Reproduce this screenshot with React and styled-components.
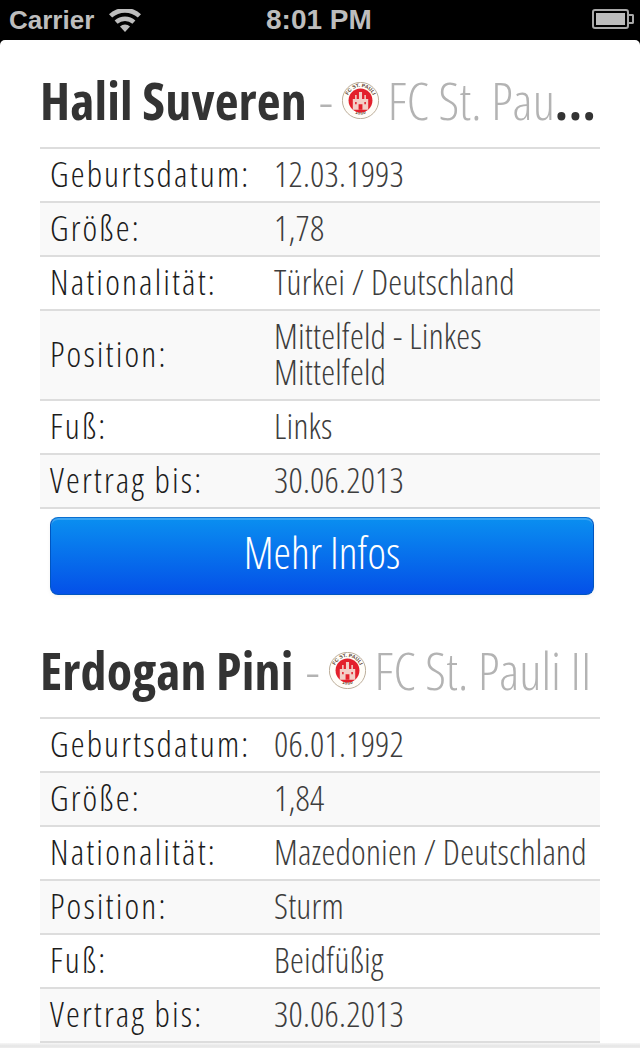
import styled, { createGlobalStyle } from 'styled-components';

const players = [
  {
    name: 'Halil Suveren',
    truncated: true,
    rows: [
      ['Geburtsdatum:', '12.03.1993'],
      ['Größe:', '1,78'],
      ['Nationalität:', 'Türkei / Deutschland'],
      ['Position:', 'Mittelfeld - Linkes Mittelfeld'],
      ['Fuß:', 'Links'],
      ['Vertrag bis:', '30.06.2013'],
    ],
  },
  {
    name: 'Erdogan Pini',
    rows: [
      ['Geburtsdatum:', '06.01.1992'],
      ['Größe:', '1,84'],
      ['Nationalität:', 'Mazedonien / Deutschland'],
      ['Position:', 'Sturm'],
      ['Fuß:', 'Beidfüßig'],
      ['Vertrag bis:', '30.06.2013'],
    ],
  },
];

function Crest({ id }) {
  return (
    <CrestSvg viewBox="0 0 48 48">
      <defs>
        <path id={`${id}-top`} d="M6.5 24a17.5 17.5 0 0 1 35 0" />
        <path id={`${id}-bottom`} d="M5 27a19.5 19.5 0 0 0 38 0" />
      </defs>
      <circle cx="24" cy="24" r="23.5" fill="#fffdf8" stroke="#a8967e" />
      <CrestText>
        <textPath href={`#${id}-top`} startOffset="50%" textAnchor="middle">FC ST. PAULI</textPath>
      </CrestText>
      <CrestText>
        <textPath href={`#${id}-bottom`} startOffset="50%" textAnchor="middle">1910</textPath>
      </CrestText>
      <circle cx="24" cy="24" r="15.5" fill="#e3202c" />
      <path d="M14 36v-14h3v-5h2v5h3v-9h4v9h3v-5h2v5h3v14z" fill="#f3cfc8" />
      <path d="M21.5 36v-7h5v7zM17 26h2v3h-2zM29 26h2v3h-2z" fill="#e3202c" />
    </CrestSvg>
  );
}

function App() {
  return (
    <>
      <GlobalStyle />
      <StatusBar>
        <Carrier>Carrier</Carrier>
        <WifiIcon viewBox="0 0 32 23">
          <path d="M16 23l-5-5.6a7.4 7.4 0 0 1 10 0z" />
          <path d="M8.6 14.8l-3-3.3a15.4 15.4 0 0 1 20.8 0l-3 3.3a11 11 0 0 0-14.8 0z" />
          <path d="M3.2 8.6L0 5.2a23.5 23.5 0 0 1 32 0l-3.200 3.400a19 19 0 0 0-25.600 0z" />
        </WifiIcon>
        <Clock>8:01 PM</Clock>
        <Battery>
          <BatteryFill />
        </Battery>
      </StatusBar>
      <Page>
        {players.map((player, i) => (
          <Player key={player.name}>
            <Heading>
              <Name>{player.name}</Name>
              <Dash>-</Dash>
              <Crest id={`crest-${i}`} />
              <Club>{player.truncated ? 'FC St. Pau' : 'FC St. Pauli II'}</Club>
              {player.truncated && <Dots>...</Dots>}
            </Heading>
            <Table>
              {player.rows.map(([label, value]) => (
                <Row key={label}>
                  <Label>{label}</Label>
                  <Value>{value}</Value>
                </Row>
              ))}
            </Table>
            {player.truncated && <MoreButton>Mehr Infos</MoreButton>}
          </Player>
        ))}
      </Page>
      <BottomEdge />
    </>
  );
}

const GlobalStyle = createGlobalStyle`
  html, body {
    margin: 0;
    height: 1048px;
    overflow: hidden;
    background: #000;
    font-family: "Open Sans", "Liberation Sans", sans-serif;
    font-stretch: 75%;
  }
`;

const StatusBar = styled.div`
  height: 40px;
  background: #000;
  color: #bdbdbd;
  display: flex;
  align-items: center;
  padding: 0 6px 0 9px;
  font-family: "Liberation Sans", sans-serif;
  font-stretch: normal;
  font-size: 26px;
  font-weight: 700;
  position: relative;
`;

const Carrier = styled.span``;

const WifiIcon = styled.svg`
  width: 32px;
  height: 23px;
  margin-left: 15px;
  fill: #bdbdbd;
`;

const Clock = styled.span`
  position: absolute;
  left: 266px;
  font-size: 28px;
`;

const Battery = styled.div`
  margin-left: auto;
  margin-right: 5px;
  margin-top: -2px;
  box-sizing: border-box;
  width: 37px;
  height: 20px;
  border: 2px solid #a8a8a8;
  border-radius: 3px;
  padding: 2px;
  position: relative;
  &::after {
    content: '';
    position: absolute;
    box-sizing: border-box;
    right: -7px;
    top: 3px;
    width: 5px;
    height: 10px;
    border: 2px solid #a8a8a8;
    border-left: none;
    border-radius: 0 2px 2px 0;
  }
`;

const BatteryFill = styled.div`
  height: 100%;
  background: #bdbdbd;
`;

const Page = styled.main`
  background: #fff;
  border-radius: 5px 5px 0 0;
  height: 1003px;
  overflow: hidden;
  padding: 0 40px;
`;

const Player = styled.section`
  padding-top: 27px;
  margin-bottom: 15px;
`;

const Heading = styled.h2`
  margin: 0;
  box-sizing: border-box;
  height: 80px;
  padding-bottom: 16px;
  display: flex;
  align-items: center;
  white-space: nowrap;
  color: #b3b3b3;
  font-size: 52px;
  font-weight: 300;
`;

const Name = styled.span`
  color: #333;
  font-weight: 700;
  letter-spacing: 0.15px;
  margin-right: 12px;
`;

const Dash = styled.span`
  margin-right: 9px;
`;

const CrestSvg = styled.svg`
  width: 37px;
  height: 37px;
  margin-right: 9px;
  position: relative;
  top: 1px;
`;

const CrestText = styled.text`
  font-family: "Liberation Sans", sans-serif;
  font-stretch: normal;
  font-size: 6.5px;
  font-weight: 700;
  fill: #5a3d30;
`;

const Club = styled.span``;

const Dots = styled.span`
  color: #333;
  font-weight: 700;
  letter-spacing: 0.6px;
`;

const Table = styled.div`
  border-top: 2px solid #ddd;
`;

const Row = styled.div`
  display: grid;
  grid-template-columns: 225px 1fr;
  align-items: center;
  padding: 7px 8px 9px 10px;
  border-bottom: 2px solid #ddd;
  color: #1c1c1c;
  font-size: 35px;
  line-height: 36px;
  &:nth-child(even) {
    background: #f9f9f9;
  }
`;

const Label = styled.div`
  font-weight: 300;
  letter-spacing: 2.15px;
`;

const Value = styled.div`
  color: #3d3d3d;
  font-weight: 300;
  letter-spacing: 0.22px;
  margin-left: -1px;
`;

const MoreButton = styled.button`
  display: block;
  width: 544px;
  height: 78px;
  margin: 8px 0 0 10px;
  padding: 0 0 8px;
  border: 1px solid #0055c0;
  border-top-color: #0a6fd0;
  border-radius: 8px;
  background: linear-gradient(#0a8ff0, #0450e8);
  box-shadow: inset 0 2px 0 rgba(255, 255, 255, 0.2), 0 2px 4px rgba(0, 0, 0, 0.05);
  color: #fff;
  font-family: inherit;
  font-stretch: 75%;
  font-size: 44px;
  font-weight: 300;
`;

const BottomEdge = styled.div`
  position: fixed;
  left: 0;
  right: 0;
  bottom: 0;
  height: 5px;
  background: linear-gradient(#f6f6f6, #e6e6e6 60%, #eeeeee);
`;

export default App;
